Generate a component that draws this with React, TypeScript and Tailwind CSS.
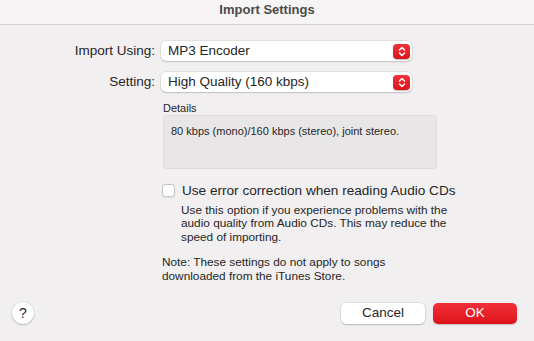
import React from 'react';

const font = { fontFamily: '"Liberation Sans", Arial, sans-serif' };

const Arrows: React.FC = () => (
  <span className="flex h-[15px] w-[17px] items-center justify-center rounded-[4px] bg-gradient-to-b from-[#f0323a] to-[#de1019] shadow-[0_0.5px_1px_rgba(0,0,0,0.25)]">
    <svg width="8" height="11" viewBox="0 0 8 11" fill="none" stroke="white" strokeWidth="1.5" strokeLinecap="round" strokeLinejoin="round">
      <path d="M1.5 4 L4 1.5 L6.5 4" />
      <path d="M1.5 7 L4 9.5 L6.5 7" />
    </svg>
  </span>
);

const PopUp: React.FC<{ value: string }> = ({ value }) => (
  <div className="flex h-[20px] w-[251px] items-center justify-between rounded-[5px] bg-white pl-[7px] pr-[2px] text-[13.5px] text-[#262626] shadow-[0_0_0_0.5px_rgba(0,0,0,0.12),0_1px_1.5px_rgba(0,0,0,0.15)]">
    <span>{value}</span>
    <Arrows />
  </div>
);

const Row: React.FC<{ label: string; value: string }> = ({ label, value }) => (
  <div className="flex items-center">
    <span className="w-[156px] pr-[1px] text-right text-[13.5px] text-[#262626]">{label}</span>
    <div className="ml-[5px]">
      <PopUp value={value} />
    </div>
  </div>
);

export default function App() {
  return (
    <div className="flex h-[341px] w-[534px] flex-col bg-[#f1eff0]" style={font}>
      {/* title bar */}
      <div className="flex h-[25px] shrink-0 items-center justify-center border-b border-[#d5d3d4] bg-[#f6f4f5] pb-[5px] text-[13px] font-bold text-[#4a4a4a]">
        Import Settings
      </div>

      <div className="flex flex-col pt-[16px]">
        <Row label="Import Using:" value="MP3 Encoder" />
        <div className="mt-[11px]">
          <Row label="Setting:" value="High Quality (160 kbps)" />
        </div>

        {/* details */}
        <div className="ml-[163px] mt-[8px] flex flex-col">
          <span className="text-[11px] leading-[14px] text-[#262626]">Details</span>
          <div className="h-[54px] w-[274px] rounded-[4px] border border-[#dddbdc] bg-[#e8e6e7] px-[7px] pt-[8px] text-[11px] leading-[14px] text-[#262626]">
            80 kbps (mono)/160 kbps (stereo), joint stereo.
          </div>
        </div>

        {/* checkbox */}
        <div className="ml-[162px] mt-[14px] flex h-[16px] items-center">
          <span className="h-[13px] w-[13px] rounded-[3.5px] border border-[#c4c2c3] bg-white shadow-[0_0.5px_1px_rgba(0,0,0,0.08)]" />
          <span className="ml-[7px] text-[13.6px] leading-[16px] text-[#262626]">Use error correction when reading Audio CDs</span>
        </div>
        <p className="ml-[181px] mt-[5px] w-[274px] text-[11.8px] leading-[13.5px] text-[#262626]">
          Use this option if you experience problems with the audio quality from Audio CDs. This may reduce the speed of importing.
        </p>

        <p className="ml-[162px] mt-[12px] w-[250px] text-[11.8px] leading-[13.5px] text-[#262626]">
          Note: These settings do not apply to songs downloaded from the iTunes Store.
        </p>
      </div>

      {/* bottom buttons */}
      <div className="mt-auto mb-[17px] flex items-center px-[12px]">
        <button className="flex h-[22px] w-[22px] items-center justify-center rounded-full bg-white text-[14px] text-[#262626] shadow-[0_0_0_0.5px_rgba(0,0,0,0.1),0_1px_2px_rgba(0,0,0,0.2)]">
          ?
        </button>
        <div className="ml-auto flex gap-[8px] pr-[5px]">
          <button className="h-[21px] w-[84px] rounded-[5px] bg-white text-[13.5px] text-[#262626] shadow-[0_0_0_0.5px_rgba(0,0,0,0.12),0_1px_1.5px_rgba(0,0,0,0.18)]">
            Cancel
          </button>
          <button className="h-[21px] w-[84px] rounded-[5px] bg-gradient-to-b from-[#ef2f38] to-[#df0f18] text-[13.5px] text-white shadow-[0_1px_1.5px_rgba(0,0,0,0.2)]">
            OK
          </button>
        </div>
      </div>
    </div>
  );
}
